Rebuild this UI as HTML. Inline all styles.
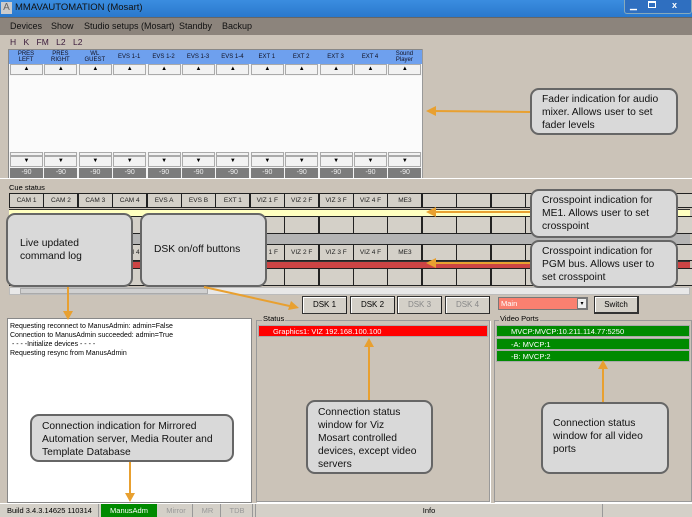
<!DOCTYPE html>
<html><head><meta charset="utf-8"><style>
*{margin:0;padding:0;box-sizing:border-box}
body{width:692px;height:517px;overflow:hidden;background:#cbc3b8;font-family:"Liberation Sans",sans-serif;position:relative;font-size:8px;color:#000}
.a{position:absolute}
.call{position:absolute;background:#d9d9d9;border:2px solid #666;border-radius:9px;font-size:10.3px;line-height:13px;color:#111;padding:6px 10px}
.cell{position:absolute;background:#d4d0c8;border:1px solid #222;font-size:6.5px;text-align:center;color:#222}
.btn{position:absolute;background:#d4d0c8;border:1px solid #333;border-right-color:#222;font-size:8px;text-align:center;line-height:16px;box-shadow:inset 1px 1px #fff}
.m{position:absolute;top:21px;font-size:9px;color:#111}
</style></head><body>
<div class="a" style="left:0;top:0;width:692px;height:17px;background:linear-gradient(#3b8de0,#2a78cc)"></div>
<div class="a" style="left:1px;top:2px;width:11px;height:12px;background:#ccc;color:#666;font-size:10px;line-height:12px;text-align:center">A</div>
<div class="a" style="left:15px;top:2px;font-size:9.5px;color:#111">MMAVAUTOMATION (Mosart)</div>
<div class="a" style="left:624px;top:0;width:68px;height:14px;background:#2f6fc0;border:1px solid #8ab;border-top:none;border-radius:0 0 3px 3px"></div>
<div class="a" style="left:630px;top:0;font-size:9px;color:#fff">▁</div>
<div class="a" style="left:648px;top:1px;width:8px;height:7px;border:1.5px solid #fff;border-top-width:2.5px"></div>
<div class="a" style="left:672px;top:0;font-size:9px;color:#fff;font-weight:bold">x</div>
<div class="a" style="left:0;top:17px;width:692px;height:18px;background:#8c847c;border-top:1px solid #666"></div>
<div class="m" style="left:10px">Devices</div>
<div class="m" style="left:51px">Show</div>
<div class="m" style="left:84px">Studio setups (Mosart)</div>
<div class="m" style="left:179px">Standby</div>
<div class="m" style="left:222px">Backup</div>
<div class="a" style="left:10px;top:37px;font-size:8.5px;color:#3a1a3a;word-spacing:5px">H K FM L2 L2</div>
<div class="a" style="left:8px;top:49px;width:415px;height:130px;background:#f4f4f4;border:1px solid #888"></div>
<div class="a" style="left:9px;top:50px;width:413px;height:14px;background:#6ea0ee"></div>
<div class="a" style="left:9px;top:76px;width:413px;height:76px;background:#fbfbfb"></div>
<div class="a" style="left:422px;top:49px;width:1px;height:130px;background:#999"></div>
<div id="fad"></div>
<div class="a" style="left:0;top:178px;width:692px;height:1px;background:#fff"></div>
<div class="a" style="left:9px;top:183px;font-size:7.5px">Cue status</div>
<div id="xp"></div>
<div class="a" style="left:9px;top:209px;width:681px;height:7px;background:#ffffc0;border-top:1px solid #333"></div>
<div class="a" style="left:9px;top:234px;width:681px;height:10px;background:#b4b4b4"></div>
<div class="a" style="left:9px;top:261px;width:681px;height:7px;background:#cc4444;border-top:1px solid #333"></div>
<div class="a" style="left:9px;top:287px;width:681px;height:8px;background:#e8e8e8;border:1px solid #bbb"></div>
<div class="a" style="left:20px;top:288px;width:188px;height:6px;background:#d0d0d0;border:1px solid #aaa"></div>
<div class="btn" style="left:302px;top:296px;width:45px;height:18px">DSK 1</div>
<div class="btn" style="left:350px;top:296px;width:45px;height:18px">DSK 2</div>
<div class="btn" style="left:397px;top:296px;width:45px;height:18px;color:#888">DSK 3</div>
<div class="btn" style="left:445px;top:296px;width:45px;height:18px;color:#888">DSK 4</div>
<div class="a" style="left:498px;top:297px;width:90px;height:13px;background:#fa8070;border:1px solid #777;color:#fff;font-size:7.5px;padding-left:2px;line-height:11px">Main</div>
<div class="a" style="left:577px;top:298px;width:10px;height:11px;background:#eee;border:1px solid #777;font-size:6px;text-align:center;line-height:10px">▾</div>
<div class="btn" style="left:594px;top:296px;width:45px;height:18px;border-right:2px solid #333;border-bottom:2px solid #333">Switch</div>
<div class="a" style="left:7px;top:318px;width:245px;height:185px;background:#fff;border:1px solid #888;font-size:7px;line-height:9px;padding:3px 2px">Requesting reconnect to ManusAdmin: admin=False<br>Connection to ManusAdmin succeeded: admin=True<br>&nbsp;- - - -Initialize devices - - - -<br>Requesting resync from ManusAdmin</div>
<div class="a" style="left:256px;top:320px;width:234px;height:182px;border:1px solid #999;box-shadow:1px 1px #fff"></div>
<div class="a" style="left:262px;top:314px;font-size:7.5px;background:#cbc3b8;padding:0 1px">Status</div>
<div class="a" style="left:258px;top:325px;width:230px;height:12px;background:#f00;color:#fff;font-size:7.5px;line-height:12px;padding-left:14px;border:1px solid #aaa">Graphics1: VIZ 192.168.100.100</div>
<div class="a" style="left:494px;top:320px;width:198px;height:182px;border:1px solid #999;box-shadow:1px 1px #fff"></div>
<div class="a" style="left:499px;top:314px;font-size:7.5px;background:#cbc3b8;padding:0 1px">Video Ports</div>
<div class="a" style="left:496px;top:325px;width:194px;height:12px;background:#008a00;color:#fff;font-size:7.5px;line-height:12px;padding-left:14px;border:1px solid #aaa">MVCP:MVCP:10.211.114.77:5250</div>
<div class="a" style="left:496px;top:338px;width:194px;height:12px;background:#008a00;color:#fff;font-size:7.5px;line-height:12px;padding-left:14px;border:1px solid #aaa">-A: MVCP:1</div>
<div class="a" style="left:496px;top:350px;width:194px;height:12px;background:#008a00;color:#fff;font-size:7.5px;line-height:12px;padding-left:14px;border:1px solid #aaa">-B: MVCP:2</div>
<div class="a" style="left:0;top:503px;width:692px;height:14px;background:#d4d0c8;border-top:1px solid #fff"></div>
<div class="a" style="left:0;top:504px;width:99px;height:13px;border-right:1px solid #999;font-size:7.5px;line-height:13px;padding-left:7px">Build 3.4.3.14625 110314</div>
<div class="a" style="left:101px;top:504px;width:56px;height:13px;background:#008a00;color:#fff;font-size:7.5px;line-height:13px;text-align:center">ManusAdm</div>
<div class="a" style="left:160px;top:504px;width:33px;height:13px;border-right:1px solid #999;color:#999;font-size:7.5px;line-height:13px;text-align:center">Mirror</div>
<div class="a" style="left:195px;top:504px;width:26px;height:13px;border-right:1px solid #999;color:#999;font-size:7.5px;line-height:13px;text-align:center">MR</div>
<div class="a" style="left:222px;top:504px;width:31px;height:13px;border-right:1px solid #999;color:#999;font-size:7.5px;line-height:13px;text-align:center">TDB</div>
<div class="a" style="left:255px;top:504px;width:348px;height:13px;border-left:1px solid #999;border-right:1px solid #999;font-size:7.5px;line-height:13px;text-align:center">Info</div>
<div class="call" style="left:530px;top:88px;width:148px;height:47px;padding:3px 10px">Fader indication for audio mixer. Allows user to set fader levels</div>
<div class="call" style="left:530px;top:189px;width:148px;height:49px;padding:3px 10px">Crosspoint indication for ME1. Allows user to set crosspoint</div>
<div class="call" style="left:530px;top:240px;width:148px;height:48px;padding:3px 10px">Crosspoint indication for PGM bus. Allows user to set crosspoint</div>
<div class="call" style="left:6px;top:213px;width:127px;height:74px;padding:22px 12px">Live updated command log</div>
<div class="call" style="left:140px;top:213px;width:127px;height:74px;padding:28px 12px">DSK on/off buttons</div>
<div class="call" style="left:30px;top:414px;width:204px;height:48px;padding:4px 10px">Connection indication for Mirrored Automation server, Media Router and Template Database</div>
<div class="call" style="left:306px;top:400px;width:127px;height:74px;padding:4px 14px 4px 10px">Connection status window for Viz Mosart controlled devices, except video servers</div>
<div class="call" style="left:541px;top:402px;width:128px;height:72px;padding:13px 10px">Connection status window for all video ports</div>
<svg class="a" style="left:0;top:0" width="692" height="517">
<g stroke="#e8a030" stroke-width="2" fill="none">
<path d="M530,112 L432,111"/>
<path d="M530,212 L430,212"/><path d="M530,263 L430,263"/>
<path d="M68,287 L68,316"/><path d="M204,287 L294,307"/>
<path d="M130,462 L130,500"/><path d="M369,400 L369,342"/><path d="M603,402 L603,364"/>
</g>
<g fill="#e8a030">
<path d="M426,111 L436,106 L436,116z"/><path d="M426,212 L436,207 L436,217z"/><path d="M426,263 L436,258 L436,268z"/>
<path d="M68,320 L63,311 L73,311z"/><path d="M299,308 L288,310 L291,301z"/>
<path d="M130,502 L125,493 L135,493z"/><path d="M369,338 L364,347 L374,347z"/><path d="M603,360 L598,369 L608,369z"/>
</g></svg>
<script>
var f=document.getElementById('fad'),h='';
var L=['PRES<br>LEFT','PRES<br>RIGHT','WL<br>GUEST','EVS 1-1','EVS 1-2','EVS 1-3','EVS 1-4','EXT 1','EXT 2','EXT 3','EXT 4','Sound<br>Player'];
for(var i=0;i<12;i++){var x=9+i*34.4;
h+='<div class="a" style="left:'+x+'px;top:50px;width:34px;height:14px;color:#112;font-size:6px;line-height:6.5px;text-align:center;display:flex;align-items:center;justify-content:center">'+L[i]+'</div>';
h+='<div class="a" style="left:'+(x+1)+'px;top:64px;width:33px;height:11px;background:#f2f2f2;border:1px solid #aaa;font-size:6px;text-align:center;line-height:9px">▲</div>';
h+='<div class="a" style="left:'+(x+1)+'px;top:152px;width:33px;height:4px;background:#f2f2f2;border:1px solid #aaa"></div>';
h+='<div class="a" style="left:'+(x+1)+'px;top:156px;width:33px;height:11px;background:#f2f2f2;border:1px solid #aaa;font-size:6px;text-align:center;line-height:9px">▼</div>';
h+='<div class="a" style="left:'+(x+1)+'px;top:168px;width:33px;height:10px;background:#7c7c7c;color:#eee;font-size:7px;text-align:center;line-height:10px">-90</div>';}
f.innerHTML=h;
var X=['CAM 1','CAM 2','CAM 3','CAM 4','EVS A','EVS B','EXT 1','VIZ 1 F','VIZ 2 F','VIZ 3 F','VIZ 4 F','ME3'];
h='';var rows=[[193,15,1],[216,18,0],[244,17,1],[268,18,0]];
for(var r=0;r<4;r++)for(var i=0;i<20;i++){var x=9+i*34.4;if(x>690)break;
h+='<div class="cell" style="left:'+x+'px;top:'+rows[r][0]+'px;width:35px;height:'+rows[r][1]+'px;line-height:'+(rows[r][1]-2)+'px">'+(rows[r][2]&&i<12?X[i]:'')+'</div>';}
document.getElementById('xp').innerHTML=h;
</script>
</body></html>
